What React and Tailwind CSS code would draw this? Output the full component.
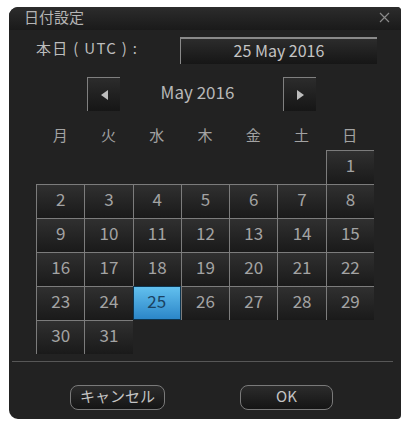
import React, { useState } from "react";

const jp = { fontFamily: '"Noto Sans CJK JP", "Noto Sans", sans-serif' };
const weekDays = ["月", "火", "水", "木", "金", "土", "日"];

// May 2016 starts on a Sunday (last column)
const buildCells = () => {
  const cells = [];
  for (let i = 0; i < 6; i++) cells.push(null);
  for (let d = 1; d <= 31; d++) cells.push(d);
  while (cells.length < 42) cells.push(null);
  return cells;
};

const DayCell = ({ day, selected, onPick }) => {
  if (!day) return <div className="h-[34px]" />;
  if (selected) {
    return (
      <div className="h-[34px] pb-[5px] flex items-center justify-center border border-[#0d3550] bg-gradient-to-b from-[#62c0ee] to-[#2b86c8] text-[17px] text-[#1a4262]">
        {day}
      </div>
    );
  }
  return (
    <button
      onClick={() => onPick(day)}
      className="h-[34px] pb-[5px] flex items-center justify-center border-t border-l border-[#7c7c7c] bg-gradient-to-b from-[#303030] to-[#1a1a1a] text-[17px] text-[#a3a3a3]"
    >
      {day}
    </button>
  );
};

const NavButton = ({ dir }) => (
  <button className="w-[33px] h-[34px] flex items-center justify-center border-t border-l border-[#808080] bg-gradient-to-b from-[#2c2c2c] to-[#161616]">
    <span
      className={
        dir === "left"
          ? "w-0 h-0 border-y-[5px] border-y-transparent border-r-[7px] border-r-[#bdbdbd]"
          : "w-0 h-0 border-y-[5px] border-y-transparent border-l-[7px] border-l-[#bdbdbd]"
      }
    />
  </button>
);

export default function App() {
  const [picked, setPicked] = useState(25);
  const cells = buildCells();

  return (
    <div className="w-[401px] h-[423px] bg-white pt-[7px] pl-[9px] overflow-hidden" style={jp}>
      <div className="w-[392px] h-[412px] rounded-l-[9px] rounded-r-[4px] bg-[#222222] flex flex-col overflow-hidden">
        <div className="h-[23px] flex items-center justify-between pl-[15px] pr-[11px] bg-gradient-to-b from-[#2c2c2c] to-[#1a1a1a]">
          <span className="pb-[3px] text-[15px] text-[#b4b4b4]">日付設定</span>
          <svg width="11" height="11" viewBox="0 0 11 11" className="mb-[2px]">
            <path d="M1 1 L10 10 M10 1 L1 10" stroke="#8a8a8a" strokeWidth="1.2" fill="none" />
          </svg>
        </div>

        <div className="mt-[7px] flex items-center">
          <span className="ml-[27px] pb-[4px] text-[15px] text-[#bdbdbd] tracking-[1.3px] whitespace-pre">本日 ( UTC ) :</span>
          <div className="ml-auto mr-[24px] w-[197px] h-[27px] pb-[4px] flex items-center justify-center border-t-2 border-l border-[#8a8a8a] bg-gradient-to-b from-[#2c2c2c] to-[#161616] text-[16px] text-[#c4c4c4]">
            25 May 2016
          </div>
        </div>

        <div className="mt-[13px] ml-[78px] w-[229px] flex items-center justify-between">
          <NavButton dir="left" />
          <span className="pb-[5px] text-[17px] text-[#b8b8b8] -ml-[8px]">May 2016</span>
          <NavButton dir="right" />
        </div>

        <div className="mt-[13px] ml-[27px] w-[338px] grid grid-cols-7 h-[20px]">
          {weekDays.map((w) => (
            <span key={w} className="flex items-center justify-center pb-[2px] text-[15px] text-[#a3a3a3]">
              {w}
            </span>
          ))}
        </div>

        <div className="mt-[6px] ml-[27px] w-[338px] grid grid-cols-7">
          {cells.map((d, i) => (
            <DayCell key={i} day={d} selected={d === picked} onPick={setPicked} />
          ))}
        </div>

        <div className="mt-[7px] ml-[3px] w-[381px] h-px bg-[#575757]" />

        <div className="mt-[23px] flex">
          <button className="ml-[61px] w-[95px] h-[25px] pb-[3px] rounded-[8px] border border-[#7a7a7a] bg-gradient-to-b from-[#2c2c2c] to-[#151515] text-[15px] text-[#c4c4c4] flex items-center justify-center">
            キャンセル
          </button>
          <button className="ml-[75px] w-[93px] h-[25px] pb-[3px] rounded-[8px] border border-[#7a7a7a] bg-gradient-to-b from-[#2c2c2c] to-[#151515] text-[15px] text-[#c4c4c4] flex items-center justify-center">
            OK
          </button>
        </div>
      </div>
    </div>
  );
}
